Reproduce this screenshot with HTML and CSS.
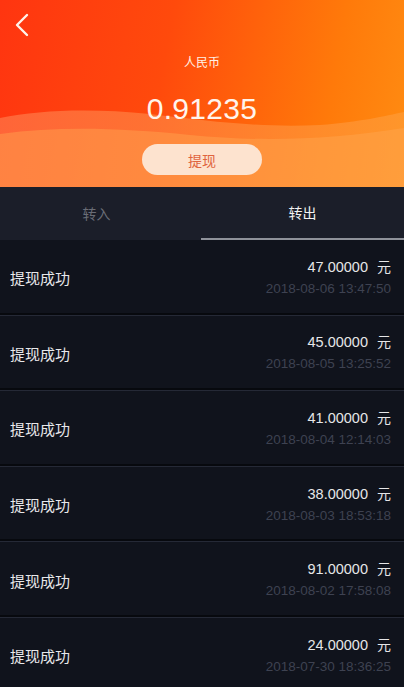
FILE: index.html
```html
<!DOCTYPE html>
<html>
<head>
<meta charset="utf-8">
<link rel="stylesheet" href="styles.css">
</head>
<body>
<div class="page">
  <header class="hero">
    <svg class="waves" viewBox="0 0 404 187" preserveAspectRatio="none">
      <defs>
        <linearGradient id="w1" x1="0" y1="0" x2="1" y2="0">
          <stop offset="0" stop-color="#ff8a5a"/>
          <stop offset="1" stop-color="#ffa040"/>
        </linearGradient>
      </defs>
      <path d="M0 118 C40 110 90 108 150 114 C210 121 260 128 320 125 C360 122 385 116 404 112 L404 187 L0 187 Z" fill="url(#w1)" opacity="0.55"/>
      <path d="M0 134 C60 126 120 128 190 135 C260 142 330 140 404 128 L404 187 L0 187 Z" fill="#ffa650" opacity="0.45"/>
    </svg>
    <div class="topbar">
      <svg class="back" viewBox="0 0 20 26" width="20" height="26"><path d="M14 3 L4 13 L14 23" fill="none" stroke="#fff3ea" stroke-width="2.4" stroke-linecap="round" stroke-linejoin="round"/></svg>
    </div>
    <div class="currency">人民币</div>
    <div class="balance">0.91235</div>
    <button class="withdraw">提现</button>
  </header>
  <nav class="tabs">
    <div class="tab first">转入</div>
    <div class="tab active">转出</div>
  </nav>
  <ul class="list">
    <li class="row"><span class="title">提现成功</span><div class="right"><div class="amount">47.00000<span class="unit">元</span></div><div class="date">2018-08-06 13:47:50</div></div></li>
    <li class="row"><span class="title">提现成功</span><div class="right"><div class="amount">45.00000<span class="unit">元</span></div><div class="date">2018-08-05 13:25:52</div></div></li>
    <li class="row"><span class="title">提现成功</span><div class="right"><div class="amount">41.00000<span class="unit">元</span></div><div class="date">2018-08-04 12:14:03</div></div></li>
    <li class="row"><span class="title">提现成功</span><div class="right"><div class="amount">38.00000<span class="unit">元</span></div><div class="date">2018-08-03 18:53:18</div></div></li>
    <li class="row"><span class="title">提现成功</span><div class="right"><div class="amount">91.00000<span class="unit">元</span></div><div class="date">2018-08-02 17:58:08</div></div></li>
    <li class="row"><span class="title">提现成功</span><div class="right"><div class="amount">24.00000<span class="unit">元</span></div><div class="date">2018-07-30 18:36:25</div></div></li>
  </ul>
</div>
</body>
</html>
```
FILE: styles.css
```css
* { box-sizing: border-box; }
html, body { margin: 0; padding: 0; }
body {
  background: #10131c;
  font-family: "Liberation Sans", "Noto Sans CJK SC", sans-serif;
  width: 404px;
  height: 687px;
  overflow: hidden;
}
.page { display: flex; flex-direction: column; }
.hero {
  position: relative;
  height: 187px;
  background: linear-gradient(100deg, #ff3510 0%, #ff4a0c 40%, #ff7a0a 80%, #ff8c12 100%);
  display: flex;
  flex-direction: column;
  align-items: center;
  overflow: hidden;
}
.waves { position: absolute; left: 0; top: 0; width: 404px; height: 187px; }
.topbar {
  position: relative;
  align-self: stretch;
  height: 40px;
  padding: 12px 0 0 13px;
}
.back { display: block; }
.currency {
  position: relative;
  margin-top: 14px;
  font-family: "Noto Sans CJK SC", sans-serif;
  font-size: 12px;
  color: #fff1e6;
  line-height: 16px;
}
.balance {
  position: relative;
  margin-top: 23px;
  font-size: 30px;
  color: #fff4ec;
  line-height: 32px;
  letter-spacing: 0.3px;
}
.withdraw {
  position: relative;
  margin-top: 19px;
  width: 120px;
  height: 31px;
  border: none;
  border-radius: 16px;
  background: #fde3cf;
  color: #e0643e;
  font-family: "Noto Sans CJK SC", sans-serif;
  font-size: 14px;
  padding: 0;
}
.tabs {
  display: grid;
  grid-template-columns: 201px 1fr;
  height: 53px;
  background: #1b1e29;
}
.tab {
  display: flex;
  align-items: center;
  justify-content: center;
  font-family: "Noto Sans CJK SC", sans-serif;
  font-size: 14px;
  color: #6a6d76;
  padding-bottom: 1px;
}
.tab.first { padding-right: 8px; }
.tab.active {
  color: #f2f2f2;
  border-bottom: 2px solid #8f929a;
}
.list { list-style: none; margin: 0; padding: 0; }
.row {
  height: 75.6px;
  display: flex;
  align-items: center;
  justify-content: space-between;
  padding: 0 13px 0 10px;
  border-bottom: 1px solid #252936;
  box-shadow: inset 0 -2px 0 #07090e;
}
.title {
  font-family: "Noto Sans CJK SC", sans-serif;
  font-size: 15px;
  color: #e8e8ea;
  margin-top: 1px;
}
.right { display: flex; flex-direction: column; align-items: flex-end; }
.amount {
  font-size: 14.5px;
  color: #e6e6e8;
  line-height: 20px;
  margin-top: -1px;
}
.unit {
  font-family: "Noto Sans CJK SC", sans-serif;
  margin-left: 9px;
  font-size: 14px;
}
.date {
  font-size: 13.5px;
  color: #3e4251;
  line-height: 18px;
  margin-top: 3px;
}
```
